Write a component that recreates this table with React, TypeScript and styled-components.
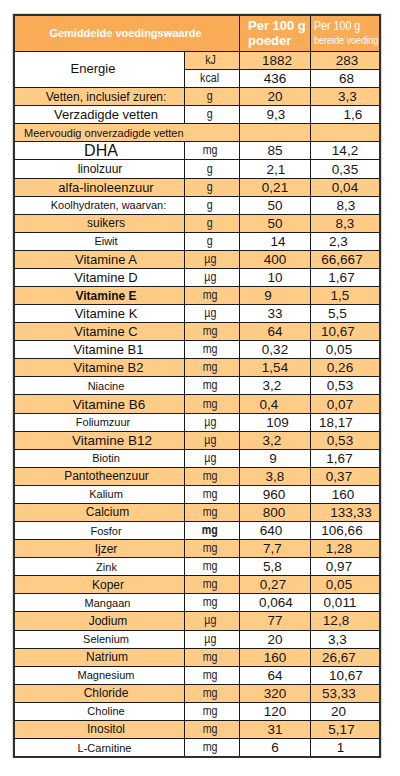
import React from 'react'
import styled, { createGlobalStyle } from 'styled-components'

const COLORS = {
  header: '#F9AC55',
  light: '#FFCC88',
  white: '#FFFFFF',
  line: '#1a1a1a',
  frame: '#2f2f2f',
  text: '#111111',
}

type Row = {
  name: string
  unit: string
  poeder: string
  bereid: string
  orange?: boolean
  size?: number
  bold?: boolean
  unitBold?: boolean
  span?: boolean
  nx?: number
  px?: number
  bx?: number
}

const ROWS: Row[] = [
  { name: 'Vetten, inclusief zuren:', unit: 'g', poeder: '20', bereid: '3,3', orange: true, size: 12, bx: 2.5 },
  { name: 'Verzadigde vetten', unit: 'g', poeder: '9,3', bereid: '1,6', size: 13, px: 1, bx: 8 },
  { name: 'Meervoudig onverzadigde vetten', unit: '', poeder: '', bereid: '', orange: true, size: 11, span: true },
  { name: 'DHA', unit: 'mg', poeder: '85', bereid: '14,2', size: 16, nx: 1.5 },
  { name: 'linolzuur', unit: 'g', poeder: '2,1', bereid: '0,35', size: 12, nx: 0.5, px: 1 },
  { name: 'alfa-linoleenzuur', unit: 'g', poeder: '0,21', bereid: '0,04', orange: true, size: 13 },
  { name: 'Koolhydraten, waarvan:', unit: 'g', poeder: '50', bereid: '8,3', size: 11, nx: 9, bx: 1 },
  { name: 'suikers', unit: 'g', poeder: '50', bereid: '8,3', orange: true, size: 12 },
  { name: 'Eiwit', unit: 'g', poeder: '14', bereid: '2,3', size: 11, px: 3, bx: -6.5 },
  { name: 'Vitamine A', unit: 'µg', poeder: '400', bereid: '66,667', orange: true, size: 13, bx: -3 },
  { name: 'Vitamine D', unit: 'µg', poeder: '10', bereid: '1,67', size: 13, bx: -3.5 },
  { name: 'Vitamine E', unit: 'mg', poeder: '9', bereid: '1,5', orange: true, size: 12, bold: true, px: -7, bx: -5 },
  { name: 'Vitamine K', unit: 'µg', poeder: '33', bereid: '5,5', size: 13, bx: -7.5 },
  { name: 'Vitamine C', unit: 'mg', poeder: '64', bereid: '10,67', orange: true, size: 13, bx: -7 },
  { name: 'Vitamine B1', unit: 'mg', poeder: '0,32', bereid: '0,05', size: 13, nx: 9, bx: -6 },
  { name: 'Vitamine B2', unit: 'mg', poeder: '1,54', bereid: '0,26', orange: true, size: 13, nx: 9, bx: -5 },
  { name: 'Niacine', unit: 'mg', poeder: '3,2', bereid: '0,53', size: 11, px: -3, bx: -5 },
  { name: 'Vitamine B6', unit: 'mg', poeder: '0,4', bereid: '0,07', orange: true, size: 13.5, nx: 9.5, px: -6, bx: -5 },
  { name: 'Foliumzuur', unit: 'µg', poeder: '109', bereid: '18,17', size: 11, nx: 3.5, px: 2.5, bx: -9 },
  { name: 'Vitamine B12', unit: 'µg', poeder: '3,2', bereid: '0,53', orange: true, size: 13.5, nx: 12.5, px: -3, bx: -5 },
  { name: 'Biotin', unit: 'µg', poeder: '9', bereid: '1,67', size: 11, px: -2, bx: -5.5 },
  { name: 'Pantotheenzuur', unit: 'mg', poeder: '3,8', bereid: '0,37', orange: true, size: 12, nx: 7, bx: -6 },
  { name: 'Kalium', unit: 'mg', poeder: '960', bereid: '160', size: 11, px: -1, bx: -2 },
  { name: 'Calcium', unit: 'mg', poeder: '800', bereid: '133,33', orange: true, size: 12, nx: 8, px: -1, bx: 6 },
  { name: 'Fosfor', unit: 'mg', poeder: '640', bereid: '106,66', size: 11, unitBold: true, px: -4, bx: -3 },
  { name: 'Ijzer', unit: 'mg', poeder: '7,7', bereid: '1,28', orange: true, size: 12, px: -2.5, bx: -6 },
  { name: 'Zink', unit: 'mg', poeder: '5,8', bereid: '0,97', size: 11, nx: 7, px: -2.5, bx: -6 },
  { name: 'Koper', unit: 'mg', poeder: '0,27', bereid: '0,05', orange: true, size: 12, nx: 8.5, px: -2, bx: -6 },
  { name: 'Mangaan', unit: 'mg', poeder: '0,064', bereid: '0,011', size: 11, nx: 8, px: 1, bx: -5 },
  { name: 'Jodium', unit: 'µg', poeder: '77', bereid: '12,8', orange: true, size: 12, nx: 8.5, bx: -9 },
  { name: 'Selenium', unit: 'µg', poeder: '20', bereid: '3,3', size: 11, bx: -7.5 },
  { name: 'Natrium', unit: 'mg', poeder: '160', bereid: '26,67', orange: true, size: 12, nx: 7.5, bx: -6 },
  { name: 'Magnesium', unit: 'mg', poeder: '64', bereid: '10,67', size: 11, bx: 1 },
  { name: 'Chloride', unit: 'mg', poeder: '320', bereid: '53,33', orange: true, size: 12, bx: -6 },
  { name: 'Choline', unit: 'mg', poeder: '120', bereid: '20', size: 11, bx: -6.5 },
  { name: 'Inositol', unit: 'mg', poeder: '31', bereid: '5,17', orange: true, size: 12, bx: -3.5 },
  { name: 'L-Carnitine', unit: 'mg', poeder: '6', bereid: '1', size: 11, nx: 5, bx: -4.5 },
]

const GlobalStyle = createGlobalStyle`
  html, body {
    margin: 0;
    padding: 0;
    background: #ffffff;
  }
  body {
    font-family: "Liberation Sans", Arial, sans-serif;
    color: ${COLORS.text};
  }
`

const Page = styled.div`
  padding: 14px 0 0 13px;
`

const Table = styled.div`
  display: grid;
  grid-template-columns: 169px 54px 70px 68px;
  grid-template-rows: 35px;
  grid-auto-rows: 17.08px;
  gap: 1px;
  width: fit-content;
  background: ${COLORS.line};
  border: 2px solid ${COLORS.frame};
  box-shadow: 0 0 0 1px rgba(0, 0, 0, 0.14);
`

const pad = (s: number) => `0 ${Math.max(0, -2 * s)}px 0 ${Math.max(0, 2 * s)}px`

const Cell = styled.div<{ $orange?: boolean; $shift?: number }>`
  display: flex;
  align-items: center;
  justify-content: center;
  min-width: 0;
  overflow: hidden;
  white-space: nowrap;
  background: ${({ $orange }) => ($orange ? COLORS.light : COLORS.white)};
  padding: ${({ $shift = 0 }) => pad($shift)};
`

// no narrow face installed, so squeeze regular Liberation Sans
const Narrow = styled.span<{ $origin?: string }>`
  display: inline-block;
  transform: scaleX(0.82);
  transform-origin: ${({ $origin = 'center' }) => $origin};
`

const HeadTitle = styled.div`
  grid-column: span 2;
  display: flex;
  align-items: center;
  justify-content: center;
  padding: 0 3px 1px 0;
  background: ${COLORS.header};
  color: #ffffff;
  font-size: 11px;
  font-weight: 700;
`

const HeadCol = styled.div<{ $narrow?: boolean }>`
  display: flex;
  flex-direction: column;
  align-items: flex-start;
  justify-content: center;
  background: ${COLORS.header};
  color: #ffffff;
  padding: 0 0 2px ${({ $narrow }) => ($narrow ? '3px' : '8px')};
  font-weight: ${({ $narrow }) => ($narrow ? 400 : 700)};
  white-space: nowrap;
  overflow: hidden;
`

const HeadLine = styled.span<{ $size: number }>`
  font-size: ${({ $size }) => $size}px;
  line-height: 15px;
`

const EnergyCell = styled(Cell)`
  grid-row: span 2;
  font-size: 13px;
  padding-bottom: 2px;
`

const NameCell = styled(Cell)<{ $size: number; $bold?: boolean }>`
  font-size: ${({ $size }) => $size}px;
  font-weight: ${({ $bold }) => ($bold ? 700 : 400)};
`

const SpanCell = styled(Cell)`
  grid-column: span 2;
  justify-content: flex-start;
  padding-left: 9px;
  font-size: 11px;
`

const UnitCell = styled(Cell)<{ $bold?: boolean }>`
  font-size: 13px;
  font-weight: ${({ $bold }) => ($bold ? 700 : 400)};
  color: #222;
  padding-bottom: 2px;
`

const ValueCell = styled(Cell)`
  font-size: 13.5px;
  color: #161616;
`

const App = () => {
  return (
    <Page>
      <GlobalStyle />
      <Table>
        <HeadTitle>Gemiddelde voedingswaarde</HeadTitle>
        <HeadCol>
          <HeadLine $size={13}>Per 100 g</HeadLine>
          <HeadLine $size={13}>poeder</HeadLine>
        </HeadCol>
        <HeadCol $narrow>
          <HeadLine $size={13}>
            <Narrow $origin="left">Per 100 g</Narrow>
          </HeadLine>
          <HeadLine $size={11}>
            <Narrow $origin="left">bereide voeding</Narrow>
          </HeadLine>
        </HeadCol>

        <EnergyCell $shift={-6.5}>Energie</EnergyCell>
        <UnitCell $orange $shift={-2}>
          <Narrow>kJ</Narrow>
        </UnitCell>
        <ValueCell $orange $shift={2}>1882</ValueCell>
        <ValueCell $orange $shift={2}>283</ValueCell>
        <UnitCell $shift={-2}>
          <Narrow>kcal</Narrow>
        </UnitCell>
        <ValueCell>436</ValueCell>
        <ValueCell $shift={1.5}>68</ValueCell>

        {ROWS.map((row) => (
          <React.Fragment key={row.name}>
            {row.span ? (
              <SpanCell $orange={row.orange}>{row.name}</SpanCell>
            ) : (
              <>
                <NameCell $orange={row.orange} $size={row.size || 12} $bold={row.bold} $shift={row.nx ?? 6.5}>
                  {row.name}
                </NameCell>
                <UnitCell $orange={row.orange} $bold={row.unitBold} $shift={-2}>
                  <Narrow>{row.unit}</Narrow>
                </UnitCell>
              </>
            )}
            <ValueCell $orange={row.orange} $shift={row.px || 0}>
              {row.poeder}
            </ValueCell>
            <ValueCell $orange={row.orange} $shift={row.bx || 0}>
              {row.bereid}
            </ValueCell>
          </React.Fragment>
        ))}
      </Table>
    </Page>
  )
}

export default App
